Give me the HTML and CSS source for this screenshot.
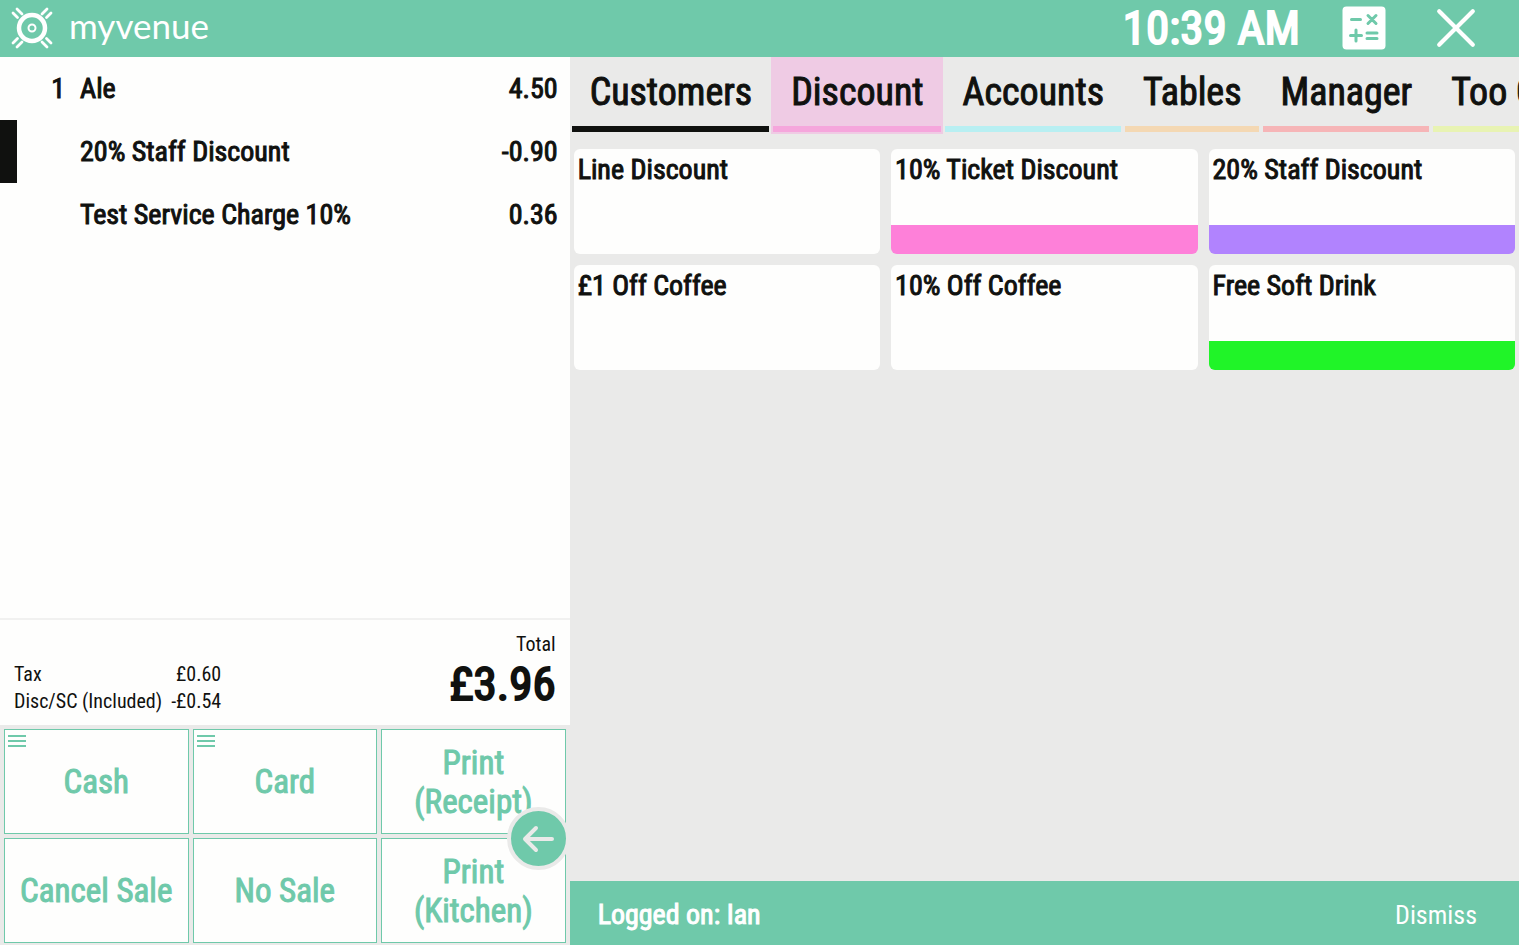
FILE: index.html
```
<!DOCTYPE html>
<html lang="en">
<head>
    <meta charset="UTF-8">
    <meta name="viewport" content="width=device-width, initial-scale=1.0">
    <title>MyVenue</title>
    <link rel="stylesheet" href="styles.css">
</head>
<body>
    <header class="topbar">
        <a class="brand" href="#">
            <svg class="brand-mark" viewBox="0 0 42 42" aria-hidden="true">
                <circle cx="21" cy="21" r="13" stroke-width="4.500"/>
                <circle cx="21" cy="21" r="3.500" stroke-width="2"/>
                <path d="M2 6l4.500 4.500M6 2l5 5M40 6l-4.500 4.500M36 2l-5 5M2 36l4.500-4.500M6 40l5-5M40 36l-4.500-4.500M36 40l-5-5" stroke-width="2.800"/>
            </svg>
            <span class="brand-name">myvenue</span>
        </a>
        <span class="clock">10:39 AM</span>
        <button class="icon-btn" aria-label="Calculator">
            <svg class="calc-icon" viewBox="0 0 44 44" aria-hidden="true">
                <rect x="0.500" y="0.500" width="43" height="43" rx="4" fill="#fff"/>
                <path d="M9.500 13.500h9M8.500 29.500h11M14 24v11M26 9.500l8 8M34 9.500l-8 8M25 27h10M25 32.500h10" stroke="#6fc9aa" stroke-width="3" stroke-linecap="round"/>
            </svg>
        </button>
        <button class="icon-btn" aria-label="Close">
            <svg class="close-icon" viewBox="0 0 40 40" aria-hidden="true">
                <path d="M4 4l32 32M36 4l-32 32" stroke="#fff" stroke-width="4" stroke-linecap="round"/>
            </svg>
        </button>
    </header>

    <div class="main">
        <section class="sale">
            <ul class="lines">
                <li class="line">
                    <span class="qty">1</span>
                    <span class="item">Ale</span>
                    <span class="price">4.50</span>
                </li>
                <li class="line selected">
                    <span class="qty"></span>
                    <span class="item">20% Staff Discount</span>
                    <span class="price">-0.90</span>
                </li>
                <li class="line">
                    <span class="qty"></span>
                    <span class="item">Test Service Charge 10%</span>
                    <span class="price">0.36</span>
                </li>
            </ul>

            <div class="totals">
                <dl class="breakdown">
                    <dt>Tax</dt>
                    <dd>£0.60</dd>
                    <dt>Disc/SC (Included)</dt>
                    <dd>-£0.54</dd>
                </dl>
                <div class="total">
                    <span class="total-label">Total</span>
                    <span class="total-value">£3.96</span>
                </div>
            </div>

            <div class="actions">
                <button class="action">
                    <svg class="menu-icon" viewBox="0 0 18 14" aria-hidden="true"><path d="M0 2h18M0 7h18M0 12h18"/></svg>
                    Cash
                </button>
                <button class="action">
                    <svg class="menu-icon" viewBox="0 0 18 14" aria-hidden="true"><path d="M0 2h18M0 7h18M0 12h18"/></svg>
                    Card
                </button>
                <button class="action">Print<br>(Receipt)</button>
                <button class="action">Cancel Sale</button>
                <button class="action">No Sale</button>
                <button class="action">Print<br>(Kitchen)</button>
                <button class="back" aria-label="Back">
                    <svg viewBox="0 0 32 32" aria-hidden="true"><path d="M30 16H3M14 5L3 16l11 11"/></svg>
                </button>
            </div>
        </section>

        <section class="panel">
            <nav class="tabs">
                <button class="tab black">Customers</button>
                <button class="tab pink active">Discount</button>
                <button class="tab cyan">Accounts</button>
                <button class="tab orange">Tables</button>
                <button class="tab red">Manager</button>
                <button class="tab lime">Too G</button>
            </nav>

            <div class="cards">
                <button class="card">Line Discount</button>
                <button class="card bar-pink">10% Ticket Discount</button>
                <button class="card bar-purple">20% Staff Discount</button>
                <button class="card">£1 Off Coffee</button>
                <button class="card">10% Off Coffee</button>
                <button class="card bar-green">Free Soft Drink</button>
            </div>

            <footer class="status">
                <span class="status-text">Logged on: Ian</span>
                <button class="dismiss">Dismiss</button>
            </footer>
        </section>
    </div>
</body>
</html>
```
FILE: styles.css
```
* {
    box-sizing: border-box;
}
body {
    margin: 0;
    height: 100vh;
    display: flex;
    flex-direction: column;
    font-family: "Roboto Condensed", Roboto, sans-serif;
    color: #10110f;
    background-color: #eaeae9;
    overflow: hidden;
}
button {
    font-family: inherit;
    color: inherit;
    background: none;
    border: none;
    padding: 0;
    cursor: pointer;
}

/* heavier text, drawn with a stroke on the regular weight */
.clock,
.line,
.total-value,
.action,
.tab,
.card,
.status-text {
    -webkit-text-stroke: 1px currentColor;
}

/* top bar */
.topbar {
    display: flex;
    align-items: center;
    height: 57px;
    padding: 0 42px 2px 11px;
    color: white;
    background-color: #6fc9aa;
}
.brand {
    display: flex;
    align-items: center;
    gap: 16px;
    margin-right: auto;
    color: white;
    text-decoration: none;
}
.brand-mark {
    width: 42px;
    height: 42px;
    fill: none;
    stroke: white;
    stroke-linecap: round;
}
.brand-name {
    font-family: Lato, sans-serif;
    font-size: 35px;
    line-height: 40px;
    padding-bottom: 6px;
}
.clock {
    font-size: 47px;
    line-height: 54px;
    margin-right: 42px;
    -webkit-text-stroke-width: 2px;
}
.icon-btn {
    display: flex;
}
.calc-icon {
    width: 44px;
    height: 44px;
    margin-right: 49px;
}
.close-icon {
    width: 42px;
    height: 42px;
}

.main {
    flex: 1;
    display: grid;
    grid-template-columns: 3fr 5fr;
    min-height: 0;
}

/* current sale */
.sale {
    display: flex;
    flex-direction: column;
    min-width: 0;
}
.lines {
    flex: 1;
    margin: 0;
    padding: 0;
    list-style: none;
    background-color: #fefefd;
}
.line {
    display: flex;
    align-items: center;
    height: 63px;
    padding-right: 12px;
    border-left: 17px solid transparent;
    font-size: 28px;
}
.line.selected {
    border-left-color: #10110f;
}
.qty {
    width: 48px;
    margin-right: 15px;
    text-align: right;
}
.item {
    flex: 1;
}
.totals {
    display: flex;
    justify-content: space-between;
    align-items: flex-end;
    height: 107px;
    padding: 0 14px 10px;
    border-top: 2px solid #f1f1f0;
    background-color: #fefefd;
}
.breakdown {
    display: grid;
    grid-template-columns: auto auto;
    column-gap: 9px;
    margin: 0;
    font-size: 20px;
    line-height: 27px;
}
.breakdown dd {
    margin: 0;
    text-align: right;
}
.total {
    display: flex;
    flex-direction: column;
    align-items: flex-end;
    padding-bottom: 3px;
}
.total-label {
    font-size: 20px;
    line-height: 24px;
}
.total-value {
    font-size: 47px;
    line-height: 56px;
    -webkit-text-stroke-width: 2px;
}
.actions {
    position: relative;
    display: grid;
    grid-template-columns: repeat(3, 1fr);
    grid-auto-rows: 105px;
    gap: 4px;
    padding: 4px 4px 2px;
}
.action {
    position: relative;
    color: #6fc9aa;
    background-color: #fefefd;
    border: 1px solid #6fc9aa;
    font-size: 33px;
    line-height: 39px;
}
.menu-icon {
    position: absolute;
    top: 4px;
    left: 3px;
    width: 18px;
    height: 14px;
    stroke: #6fc9aa;
    stroke-width: 2;
}
.back {
    position: absolute;
    top: 82px;
    right: 0;
    display: flex;
    align-items: center;
    justify-content: center;
    width: 63px;
    height: 63px;
    border: 4px solid #eaeae9;
    border-radius: 50%;
    background-color: #6fc9aa;
}
.back svg {
    width: 32px;
    height: 32px;
    fill: none;
    stroke: #eaeae9;
    stroke-width: 4;
    stroke-linecap: round;
    stroke-linejoin: round;
}

/* function panel */
.panel {
    display: flex;
    flex-direction: column;
    min-width: 0;
}
.tabs {
    display: flex;
    overflow: hidden;
}
.tab {
    flex: none;
    height: 77px;
    padding: 0 17px 6px 18px;
    border: 2px solid transparent;
    border-top: none;
    font-size: 38px;
    white-space: nowrap;
    background-size: 100% 6px;
    background-position: bottom;
    background-repeat: no-repeat;
    background-origin: padding-box;
    background-clip: border-box;
}
.tab.active {
    background-color: #efcbe4;
}
.black {
    background-image: linear-gradient(#10110f, #10110f);
}
.pink {
    background-image: linear-gradient(#f5a6dc, #f5a6dc);
}
.cyan {
    background-image: linear-gradient(#b8eff2, #b8eff2);
}
.orange {
    background-image: linear-gradient(#f4d8b3, #f4d8b3);
}
.red {
    background-image: linear-gradient(#f6b5b7, #f6b5b7);
}
.lime {
    background-image: linear-gradient(#e8f3b3, #e8f3b3);
}
.cards {
    flex: 1;
    display: grid;
    grid-template-columns: repeat(3, 1fr);
    grid-auto-rows: 105px;
    align-content: start;
    gap: 11px;
    padding: 15px 4px;
}
.card {
    display: flex;
    align-items: flex-start;
    padding: 4px;
    border-radius: 6px;
    background-color: #fefefd;
    font-size: 28px;
    line-height: 34px;
    text-align: left;
}
.bar-pink {
    background-image: linear-gradient(to top, #fe80d9 29px, transparent 29px);
}
.bar-purple {
    background-image: linear-gradient(to top, #b183fe 29px, transparent 29px);
}
.bar-green {
    background-image: linear-gradient(to top, #20f428 29px, transparent 29px);
}
.status {
    display: flex;
    align-items: center;
    justify-content: space-between;
    height: 64px;
    padding: 3px 42px 0 28px;
    color: white;
    background-color: #6fc9aa;
}
.status-text {
    font-size: 28px;
}
.dismiss {
    font-size: 26px;
}
```
